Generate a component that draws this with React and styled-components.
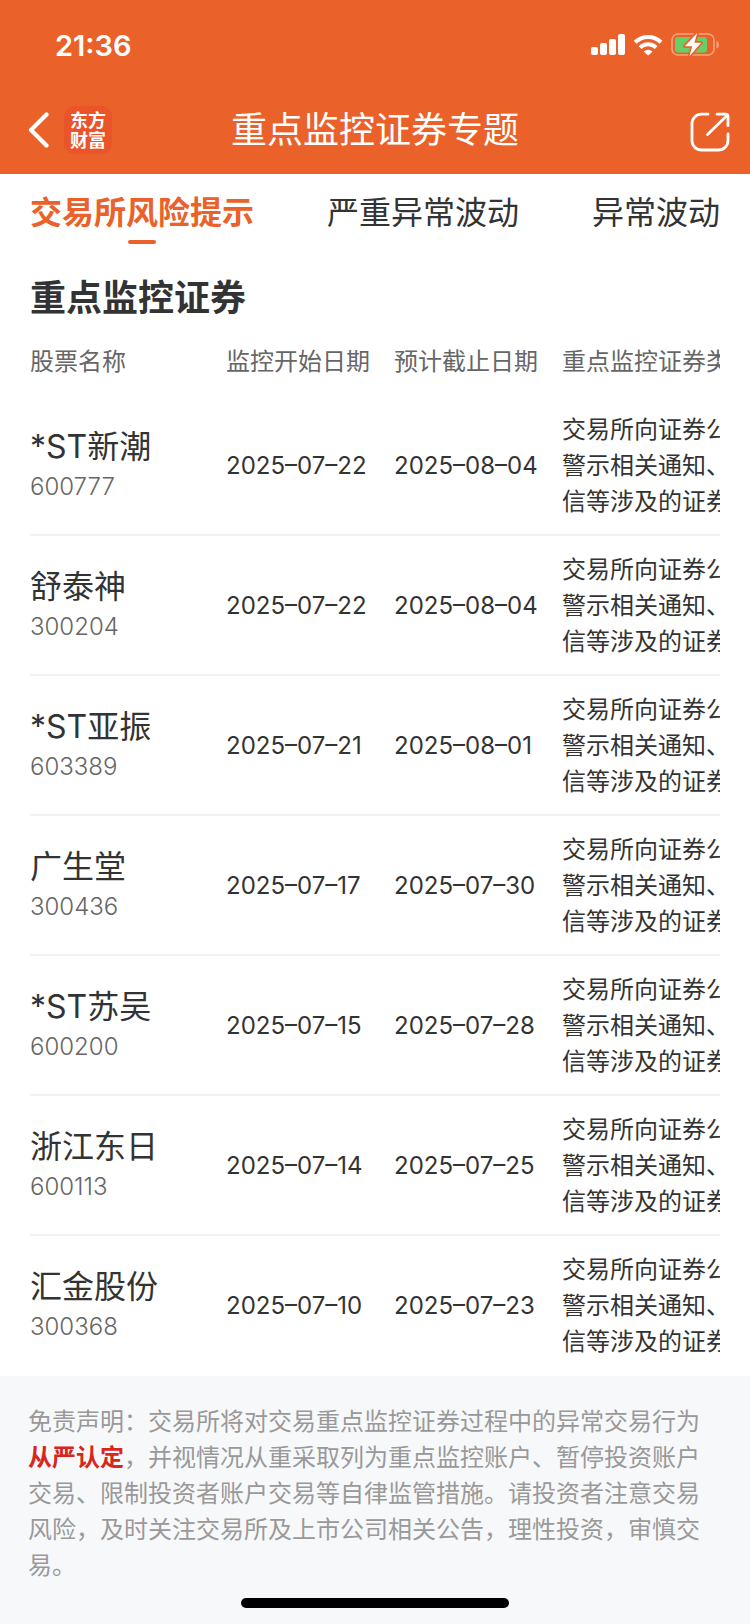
import styled, { createGlobalStyle } from "styled-components";

const stocks = [
  { name: "*ST新潮", code: "600777", start: "2025–07–22", end: "2025–08–04" },
  { name: "舒泰神", code: "300204", start: "2025–07–22", end: "2025–08–04" },
  { name: "*ST亚振", code: "603389", start: "2025–07–21", end: "2025–08–01" },
  { name: "广生堂", code: "300436", start: "2025–07–17", end: "2025–07–30" },
  { name: "*ST苏吴", code: "600200", start: "2025–07–15", end: "2025–07–28" },
  { name: "浙江东日", code: "600113", start: "2025–07–14", end: "2025–07–25" },
  { name: "汇金股份", code: "300368", start: "2025–07–10", end: "2025–07–23" },
];

const tabs = ["交易所风险提示", "严重异常波动", "异常波动"];

const reason = ["交易所向证券公", "警示相关通知、", "信等涉及的证券"];

const StatusIcons = () => (
  <svg width="130" height="26" viewBox="590 32 130 26" aria-hidden="true">
    <g fill="#fff">
      <rect x="591" y="47" width="7" height="8" rx="2" />
      <rect x="600" y="43" width="7" height="12" rx="2" />
      <rect x="609" y="39" width="7" height="16" rx="2" />
      <rect x="618" y="34" width="7" height="21" rx="2" />
      <path d="M643.6 51.6a6.6 6.6 0 0 1 9 0l-4.5 3.9z" />
    </g>
    <g fill="none" stroke="#fff" strokeWidth="4">
      <path d="M635.2 42.2a18.4 18.4 0 0 1 25.8 0" />
      <path d="M640 47.6a11.6 11.6 0 0 1 16.2 0" />
    </g>
    <rect
      x="672"
      y="34"
      width="42"
      height="21"
      rx="6"
      fill="none"
      stroke="#f4a47d"
      strokeWidth="1.6"
    />
    <path d="M716.5 41v7.6c1.5-.6 2.5-2.1 2.5-3.8s-1-3.2-2.5-3.8z" fill="#f4a47d" />
    <rect x="675" y="37" width="32" height="15.5" rx="3" fill="#65cf68" />
    <path
      d="M697.2 33 684.8 46.2h7.4l-2.8 10 11.8-13.4h-6.8z"
      fill="#fff"
      stroke="#ea622a"
      strokeWidth="3.4"
      strokeLinejoin="round"
      paintOrder="stroke"
    />
  </svg>
);

const BackIcon = () => (
  <svg width="22" height="36" viewBox="0 0 22 36" aria-hidden="true">
    <path
      d="M18.5 2.5 3 18l15.5 15.5"
      fill="none"
      stroke="#fff"
      strokeWidth="4.2"
      strokeLinejoin="round"
      strokeLinecap="round"
    />
  </svg>
);

const ShareIcon = () => (
  <svg width="40" height="44" viewBox="0 -4 40 44" aria-hidden="true">
    <g
      fill="none"
      stroke="#fff"
      strokeWidth="2.8"
      strokeLinecap="round"
      strokeLinejoin="round"
    >
      <path d="M18 2.2h-6.5a9.5 9.5 0 0 0-9.5 9.5v16.8a9.5 9.5 0 0 0 9.5 9.5h17a9.5 9.5 0 0 0 9.5-9.5v-6.5" />
      <path d="M27 2.2h8.5q2.5 0 2.5 2.5v9" />
      <path d="M17.5 22.5 37 3.5" />
    </g>
  </svg>
);

const App = () => {
  return (
    <Page lang="zh-CN">
      <GlobalStyle />
      <Header>
        <StatusBar>
          <Time>21:36</Time>
          <StatusIcons />
        </StatusBar>
        <Nav>
          <NavLeft>
            <IconButton type="button" aria-label="返回">
              <BackIcon />
            </IconButton>
            <Logo>
              <span>东方</span>
              <span>财富</span>
            </Logo>
          </NavLeft>
          <NavTitle>重点监控证券专题</NavTitle>
          <NavRight>
            <IconButton type="button" aria-label="分享">
              <ShareIcon />
            </IconButton>
          </NavRight>
        </Nav>
      </Header>
      <Main>
        <Tabs role="tablist">
          {tabs.map((tab, i) => (
            <Tab key={tab} type="button" role="tab" aria-selected={i === 0} $active={i === 0}>
              {tab}
            </Tab>
          ))}
        </Tabs>
        <SectionTitle>重点监控证券</SectionTitle>
        <TableScroll>
          <Table>
            <thead>
              <tr>
                <HeadCell $width="196px">股票名称</HeadCell>
                <HeadCell $width="168px">监控开始日期</HeadCell>
                <HeadCell $width="168px">预计截止日期</HeadCell>
                <HeadCell>重点监控证券类</HeadCell>
              </tr>
            </thead>
            <tbody>
              {stocks.map((stock) => (
                <tr key={stock.code}>
                  <Cell>
                    <StockName>{stock.name}</StockName>
                    <StockCode>{stock.code}</StockCode>
                  </Cell>
                  <Cell>{stock.start}</Cell>
                  <Cell>{stock.end}</Cell>
                  <Cell>
                    {reason.map((line) => (
                      <div key={line}>{line}</div>
                    ))}
                  </Cell>
                </tr>
              ))}
            </tbody>
          </Table>
        </TableScroll>
      </Main>
      <Footer>
        <p>
          免责声明：交易所将对交易重点监控证券过程中的异常交易行为
          <strong>从严认定</strong>
          ，并视情况从重采取列为重点监控账户、暂停投资账户交易、限制投资者账户交易等自律监管措施。请投资者注意交易风险，及时关注交易所及上市公司相关公告，理性投资，审慎交易。
        </p>
        <HomeIndicator />
      </Footer>
    </Page>
  );
};

export default App;

const GlobalStyle = createGlobalStyle`
  * {
    box-sizing: border-box;
  }

  body {
    margin: 0;
    background: #fff;
    color: #333;
    font-family: Inter, "Noto Sans CJK SC", sans-serif;
  }

  button {
    margin: 0;
    padding: 0;
    border: 0;
    background: none;
    color: inherit;
    font: inherit;
    cursor: pointer;
  }
`;

const Page = styled.div`
  display: flex;
  flex-direction: column;
  min-height: 100vh;
`;

const Header = styled.header`
  background: #ea622a;
  color: #fff;
`;

const StatusBar = styled.div`
  display: flex;
  align-items: center;
  justify-content: space-between;
  height: 90px;
  padding: 0 30px 0 55px;
`;

const Time = styled.span`
  font-size: 29px;
  font-weight: 600;
`;

const Nav = styled.nav`
  display: grid;
  grid-template-columns: 1fr auto 1fr;
  align-items: center;
  height: 84px;
  padding: 0 20px 4px;
`;

const NavLeft = styled.div`
  display: flex;
  align-items: center;
  gap: 14px;
  padding-left: 8px;
`;

const NavRight = styled.div`
  display: flex;
  justify-content: flex-end;
`;

const IconButton = styled.button`
  display: flex;
`;

const Logo = styled.div`
  display: flex;
  flex-direction: column;
  align-items: center;
  width: 48px;
  height: 48px;
  padding-top: 3px;
  border-radius: 10px;
  background: #eb5429;
  font-family: "Noto Sans CJK SC", sans-serif;
  font-size: 18px;
  font-weight: 700;
  line-height: 20px;
`;

const NavTitle = styled.h1`
  margin: 0;
  font-size: 36px;
  font-weight: 400;
  line-height: 48px;
`;

const Main = styled.main`
  padding: 0 30px;
`;

const Tabs = styled.div`
  display: flex;
  justify-content: space-between;
  padding-top: 18px;
`;

const Tab = styled.button`
  display: flex;
  flex-direction: column;
  align-items: center;
  gap: 6px;
  color: ${({ $active }) => ($active ? "#ea622a" : "#333")};
  font-size: 32px;
  font-weight: ${({ $active }) => ($active ? 700 : 400)};
  line-height: 42px;
  white-space: nowrap;

  &::after {
    content: "";
    width: 28px;
    height: 4px;
    border-radius: 2px;
    background: ${({ $active }) => ($active ? "#ea622a" : "transparent")};
  }
`;

const SectionTitle = styled.h2`
  margin: 30px 0 0;
  font-size: 36px;
  font-weight: 700;
  line-height: 48px;
`;

const TableScroll = styled.div`
  overflow-x: auto;
  scrollbar-width: none;
`;

const Table = styled.table`
  width: 100%;
  table-layout: fixed;
  border-spacing: 0;
  font-size: 24px;
  line-height: 36px;
  white-space: nowrap;
`;

const HeadCell = styled.th`
  width: ${({ $width }) => $width || "auto"};
  padding: 22px 0 16px;
  color: #666;
  font-weight: 400;
  text-align: left;
`;

const Cell = styled.td`
  padding: 16px 0 14px;
  border-bottom: 2px solid #f2f2f2;
  vertical-align: middle;

  tr:last-child & {
    border-bottom-color: transparent;
  }
`;

const StockName = styled.div`
  font-size: 32px;
  line-height: 42px;
`;

const StockCode = styled.div`
  color: #666;
  font-weight: 300;
  line-height: 38px;
`;

const Footer = styled.footer`
  flex: 1;
  padding: 28px 28px 16px;
  background: #f7f8fa;
  color: #999;
  font-size: 24px;
  line-height: 36px;

  p {
    margin: 0;
  }

  strong {
    color: #d9261c;
    font-weight: 700;
  }
`;

const HomeIndicator = styled.div`
  width: 268px;
  height: 10px;
  margin: 14px auto 0;
  border-radius: 5px;
  background: #000;
`;
